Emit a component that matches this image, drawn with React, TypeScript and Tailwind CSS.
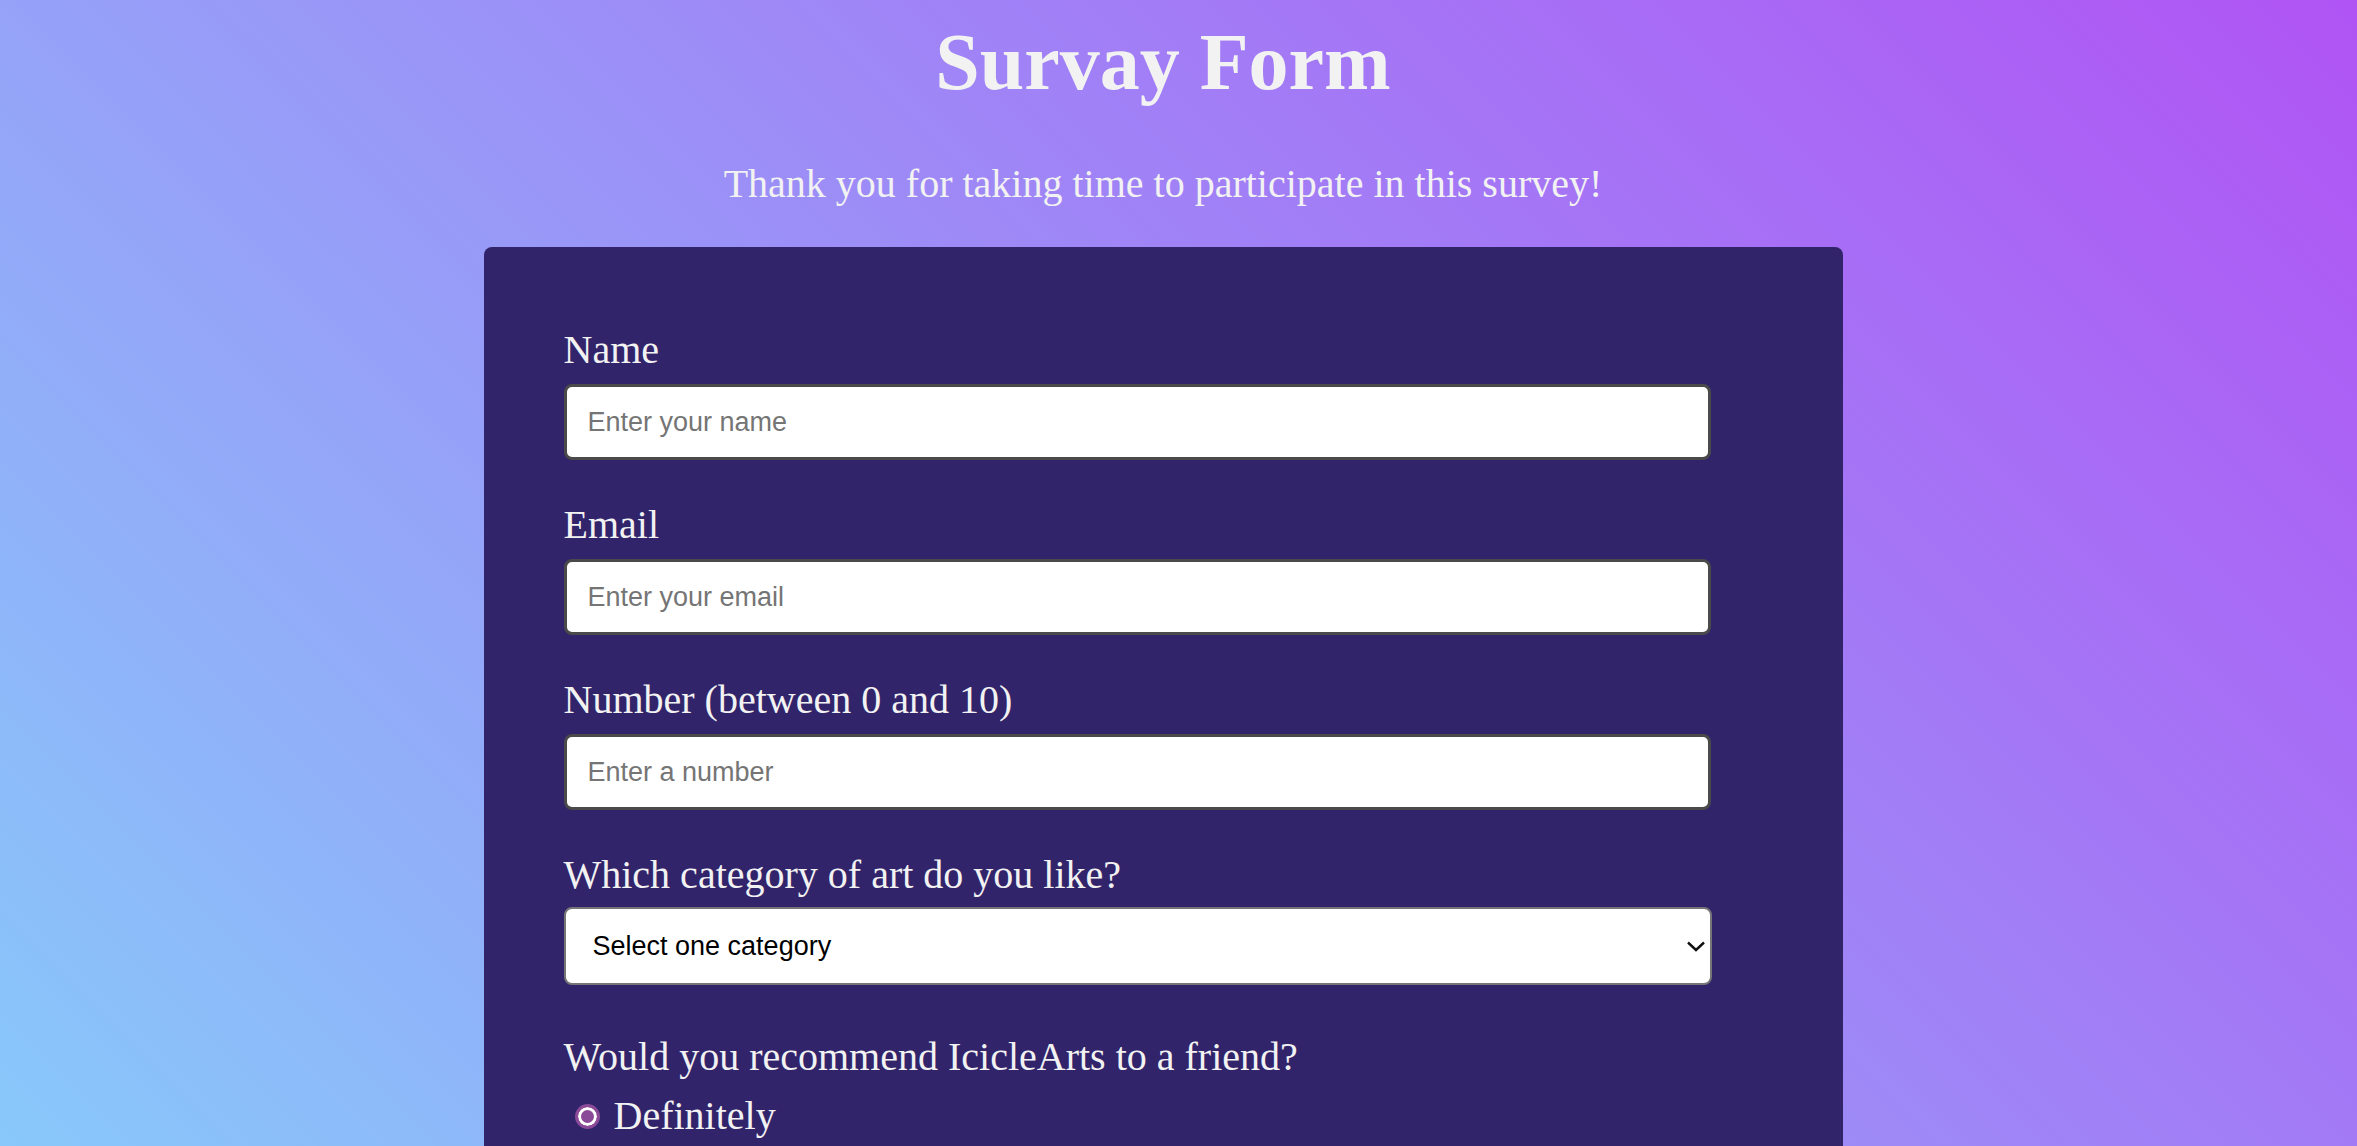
import { ChangeEvent, useState } from "react";

const fields = [
  { id: "name", label: "Name", type: "text", placeholder: "Enter your name" },
  { id: "email", label: "Email", type: "email", placeholder: "Enter your email" },
  { id: "number", label: "Number (between 0 and 10)", type: "number", placeholder: "Enter a number" },
];

const recommend = ["Definitely", "Maybe", "Not sure"];
const improvements = ["Front-end Projects", "Back-end Projects", "Data Visualization", "Challenges"];

export default function App() {
  const [values, setValues] = useState<Record<string, string>>({});

  const onChange = (e: ChangeEvent<HTMLInputElement>) => {
    setValues({ ...values, [e.target.id]: e.target.value });
  };

  return (
    <div className="min-h-screen bg-fixed bg-[linear-gradient(45deg,#88c8fa,#b054f4)] font-['Liberation_Serif',serif] text-[#f2f2f2] pb-20">
      <div className="flex flex-col items-center pr-[31px]">
        <h1 className="pt-[16px] text-[80px] leading-[92px] font-bold">Survay Form</h1>
        <p className="mt-[53px] text-[40px] leading-[46px]">
          Thank you for taking time to participate in this survey!
        </p>

        <form className="mt-[40px] w-[1359px] rounded-lg bg-[#31246b] px-20 pt-20 pb-20">
          {fields.map((f) => (
            <div key={f.id} className="mb-[42px]">
              <label htmlFor={f.id} className="block text-[40px] leading-[46px]">
                {f.label}
              </label>
              <input
                id={f.id}
                type={f.type}
                value={values[f.id] ?? ""}
                onChange={onChange}
                placeholder={f.placeholder}
                className="mt-[11px] block h-[76px] w-[1147px] rounded-lg border-[3px] border-[#4a4a4a] bg-white pl-[21px] font-['Liberation_Sans',sans-serif] text-[27px] text-black placeholder:text-[#757575] outline-none"
              />
            </div>
          ))}

          <div className="mb-[49px]">
            <label htmlFor="category" className="block text-[40px] leading-[46px]">
              Which category of art do you like?
            </label>
            <div className="relative mt-[9px] w-[1148px]">
              <select
                id="category"
                defaultValue=""
                className="block h-[78px] w-full appearance-none rounded-lg border-2 border-[#767676] bg-white pl-[27px] font-['Liberation_Sans',sans-serif] text-[27px] text-black outline-none"
              >
                <option value="" disabled>
                  Select one category
                </option>
                <option>Painting</option>
                <option>Sculpture</option>
                <option>Photography</option>
                <option>Digital Art</option>
              </select>
              <svg
                className="pointer-events-none absolute right-[7px] top-[34px]"
                width="18"
                height="11"
                viewBox="0 0 18 11"
                fill="none"
              >
                <path d="M1 1.5 L9 9 L17 1.5" stroke="#111" strokeWidth="2.4" />
              </svg>
            </div>
          </div>

          <div className="mb-[43px]">
            <p className="text-[40px] leading-[46px]">Would you recommend IcicleArts to a friend?</p>
            <div className="mt-[13px] flex flex-col gap-2">
              {recommend.map((r) => (
                <label key={r} className="flex items-center text-[40px] leading-[46px]">
                  <input
                    type="radio"
                    name="recommend"
                    className="ml-[11px] mr-[14px] h-[25px] w-[25px] appearance-none rounded-full border-[3px] border-[#8b4a97] bg-[#8b4a97] shadow-[inset_0_0_0_3px_white]"
                  />
                  {r}
                </label>
              ))}
            </div>
          </div>

          <div className="mb-[43px]">
            <p className="text-[40px] leading-[46px]">What would you like to see improved?</p>
            <div className="mt-[13px] flex flex-col gap-2">
              {improvements.map((r) => (
                <label key={r} className="flex items-center text-[40px] leading-[46px]">
                  <input
                    type="checkbox"
                    className="ml-[11px] mr-[14px] h-[25px] w-[25px] appearance-none rounded border-[3px] border-[#8b4a97] bg-white"
                  />
                  {r}
                </label>
              ))}
            </div>
          </div>

          <div className="mb-[43px]">
            <label htmlFor="comments" className="block text-[40px] leading-[46px]">
              Any comments or suggestions?
            </label>
            <textarea
              id="comments"
              placeholder="Enter your comment here..."
              className="mt-[11px] block h-[180px] w-[1147px] rounded-lg border-[3px] border-[#4a4a4a] bg-white p-5 font-['Liberation_Sans',sans-serif] text-[27px] text-black placeholder:text-[#757575] outline-none"
            />
          </div>

          <button
            type="button"
            className="block h-[76px] w-[1147px] rounded-lg bg-[#8b4a97] font-['Liberation_Sans',sans-serif] text-[27px] text-white"
          >
            Submit
          </button>
        </form>
      </div>
    </div>
  );
}
